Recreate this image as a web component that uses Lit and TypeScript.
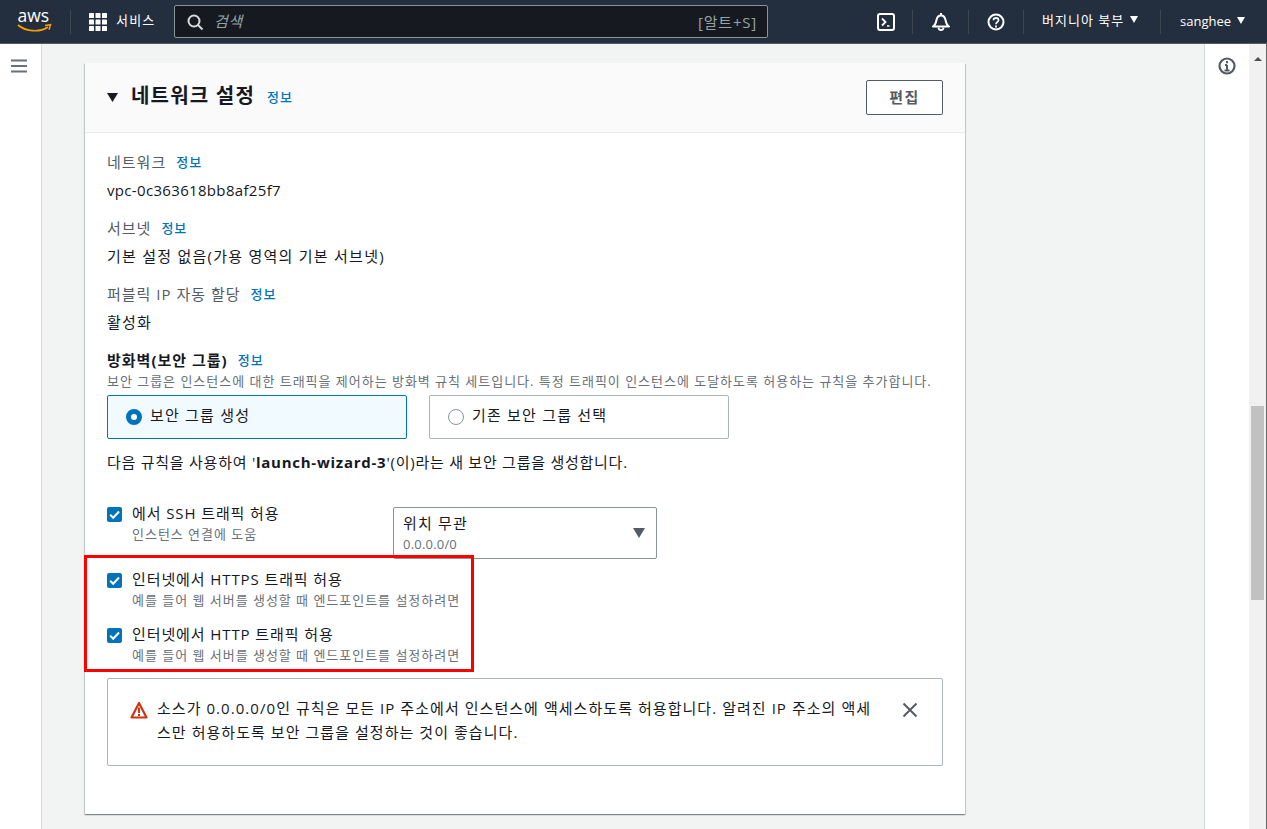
import { LitElement, html, css } from "lit";
import { customElement } from "lit/decorators.js";

const check = html`<svg class="cbx" viewBox="0 0 15 15" width="15" height="15"><rect width="15" height="15" rx="2" fill="#0073bb"/><path d="M3.200 7.700l3 3L12 4.500" fill="none" stroke="#fff" stroke-width="2"/></svg>`;
const caret = html`<svg viewBox="0 0 8 7" width="8" height="7"><path d="M0 0h8L4 7z" fill="currentColor"/></svg>`;

@customElement("app-root")
export class AppRoot extends LitElement {
  static styles = css`
    :host { display: flex; flex-direction: column; width: 1267px; height: 829px; overflow: hidden; font-family: "Open Sans", "Noto Sans CJK KR", sans-serif; font-size: 15px; color: #16191f; background: #f2f3f3; }
    * { box-sizing: border-box; }
    svg { display: block; flex: none; overflow: visible; }
    header { height: 44px; flex: none; background: #232f3e; border-bottom: 1px solid #545b64; display: flex; align-items: center; color: #fff; }
    .logo { margin-left: 17px; }
    .hsep { width: 1px; height: 24px; background: #414750; flex: none; }
    .logo-sep { margin-left: 17px; }
    .apps { margin-left: 18px; }
    .svc { margin-left: 9px; width: 39px; font-size: 13px; letter-spacing: 1.200px; line-height: 16px; margin-bottom: 3px; white-space: nowrap; }
    .search { margin-left: 19px; width: 594px; height: 33px; background: #16191f; border: 1px solid #879596; border-radius: 2px; display: flex; align-items: center; color: #d5dbdb; }
    .search svg { margin-left: 12px; }
    .search .ph { margin-left: 11px; font-style: italic; color: #95a5a6; font-size: 15px; letter-spacing: .8px; margin-bottom: 2px; }
    .search .kbd { margin-left: auto; margin-right: 10px; color: #95a5a6; font-size: 15px; letter-spacing: .8px; }
    .tools { margin-left: auto; display: flex; align-items: center; height: 100%; color: #fff; }
    .ti { display: flex; align-items: center; justify-content: center; height: 24px; }
    .w-term { width: 52px; }
    .w-bell { width: 55px; }
    .w-help { width: 54px; }
    .region { font-size: 13px; display: flex; align-items: center; gap: 6px; line-height: 16px; white-space: nowrap; }
    .w-region { width: 136px; padding-left: 18px; margin-bottom: 4px; letter-spacing: 1px; }
    .w-user { width: 106px; padding-left: 19px; margin-bottom: 2px; }
    .body { flex: 1; display: flex; min-height: 0; }
    .left { width: 42px; flex: none; background: #fff; border-right: 1px solid #d5dbdb; padding: 15px 0 0 11px; }
    .main { flex: 1; min-width: 0; padding: 19px 0 0 43px; }
    .card { width: 880px; height: 751px; background: #fff; box-shadow: 0 1px 1px 0 rgba(0,28,36,.3), 1px 1px 1px 0 rgba(0,28,36,.15), -1px 1px 1px 0 rgba(0,28,36,.15); }
    .chead { height: 70px; background: #fafafa; border-bottom: 1px solid #eaeded; display: flex; align-items: center; padding: 0 22px; }
    .chead .tri { color: #16191f; margin-right: 13px; }
    h2 { margin: 0 0 4px; font-size: 20px; letter-spacing: 1.200px; font-weight: 700; line-height: 24px; white-space: nowrap; }
    .info { color: #0073bb; font-size: 13px; letter-spacing: 1px; font-weight: 500; line-height: 16px; white-space: nowrap; }
    .chead .info { margin-left: 12px; margin-bottom: 1px; }
    .edit { margin-left: auto; width: 77px; height: 35px; background: #fff; border: 1px solid #545b64; border-radius: 2px; display: flex; align-items: center; justify-content: center; color: #545b64; font-weight: 700; font-size: 15px; letter-spacing: 1.500px; padding-bottom: 2px; }
    .cbody { padding: 19px 22px 0; }
    .lbl { display: flex; align-items: center; gap: 10px; color: #545b64; line-height: 20px; letter-spacing: 1px; white-space: nowrap; }
    .val { line-height: 20px; margin-top: 8px; margin-bottom: 18px; letter-spacing: 1.250px; white-space: nowrap; }
    .val.vpc { letter-spacing: .33px; }
    .fw { font-weight: 700; color: #16191f; }
    .desc { font-size: 13px; line-height: 15px; letter-spacing: .98px; color: #687078; white-space: nowrap; }
    .lead { margin-top: 4px; }
    .tiles { display: flex; gap: 22px; margin-top: 6px; }
    .tile { width: 300px; height: 44px; border: 1px solid #aab7b8; border-radius: 2px; display: flex; align-items: center; gap: 8px; padding-left: 18px; letter-spacing: 1.200px; }
    .tile.on { background: #f1faff; border-color: #0073bb; }
    .rd { width: 16px; height: 16px; border-radius: 50%; flex: none; border: 1px solid #879596; background: #fff; }
    .on .rd { border: 5px solid #0073bb; }
    .tile span { position: relative; top: -3px; }
    .note { margin-top: 11px; line-height: 24px; letter-spacing: .75px; white-space: nowrap; }
    .ssh { display: flex; margin-top: 33px; }
    .opt { display: flex; gap: 10px; width: 286px; letter-spacing: .9px; }
    .ssh .opt { margin-top: -4px; }
    .cbx { margin-top: 4px; }
    .opt-t { line-height: 20px; white-space: nowrap; }
    .opt-t .desc { line-height: 18px; margin-top: 2px; }
    .sel { width: 264px; height: 52px; border: 1px solid #879596; border-radius: 2px; display: flex; align-items: center; padding: 0 11px 0 9px; color: #545b64; }
    .sel .t { color: #16191f; line-height: 20px; letter-spacing: 1.200px; margin-top: -1px; }
    .sel .s { font-size: 13px; letter-spacing: .2px; color: #687078; line-height: 18px; margin-top: 2px; }
    .sel svg { margin-left: auto; }
    .hl { width: 390px; margin-top: -4px; margin-left: -23px; height: 117px; border: 3px solid #f00; padding: 11px 0 0 20px; position: relative; display: flex; flex-direction: column; gap: 15px; }
    .hl .opt { width: auto; }
    .alert { width: 836px; height: 88px; margin-top: 6px; border: 1px solid #aab7b8; border-radius: 2px; display: flex; padding: 17px 0 0 22px; }
    .alert .tri { margin-top: 5px; }
    .alert .m { width: 715px; flex: none; margin-left: 9px; line-height: 24px; letter-spacing: 1.050px; }
    .alert .x { margin: 6px 0 0 30px; }
    .right { width: 45px; flex: none; background: #fff; border-left: 1px solid #d5dbdb; padding: 13px 0 0 13px; }
    .sb { width: 18px; flex: none; background: #f1f1f1; border-right: 1px solid #666; display: flex; flex-direction: column; align-items: center; }
    .sb .up { margin-top: 13px; width: 0; height: 0; border: 4px solid transparent; border-top: 0; border-bottom: 4px solid #505050; }
    .sb .th { width: 13px; height: 194px; background: #c1c1c1; margin-top: 345px; }
  `;

  render() {
    return html`
      <header>
        <svg class="logo" viewBox="0 0 36 26" width="36" height="26"><text x="0.500" y="12.500" font-family="Open Sans" font-size="17.500" fill="#fff">aws</text><path d="M1 16c8 7 22 7.500 30 2" fill="none" stroke="#f90" stroke-width="1.700"/><path d="M28 16.500l5.500-.8-1.500 5" fill="none" stroke="#f90" stroke-width="1.500"/></svg>
        <div class="hsep logo-sep"></div>
        <svg class="apps" viewBox="0 0 18 18" width="18" height="18" fill="#fff"><rect width="5" height="5" rx=".6"/><rect x="6.500" width="5" height="5" rx=".6"/><rect x="13" width="5" height="5" rx=".6"/><rect y="6.500" width="5" height="5" rx=".6"/><rect x="6.500" y="6.500" width="5" height="5" rx=".6"/><rect x="13" y="6.500" width="5" height="5" rx=".6"/><rect y="13" width="5" height="5" rx=".6"/><rect x="6.500" y="13" width="5" height="5" rx=".6"/><rect x="13" y="13" width="5" height="5" rx=".6"/></svg>
        <span class="svc">서비스</span>
        <div class="search">
          <svg viewBox="0 0 16 16" width="16" height="16" fill="none" stroke="#d5dbdb" stroke-width="2"><circle cx="7" cy="7" r="5.500"/><path d="M11 11l4.500 4.500"/></svg>
          <span class="ph">검색</span>
          <span class="kbd">[알트+S]</span>
        </div>
        <div class="tools">
          <div class="ti w-term"><svg viewBox="0 0 18 18" width="18" height="18" fill="none" stroke="#fff" stroke-width="2"><rect x="1" y="1" width="16" height="16" rx="2"/><path d="M5 5.500l3.500 3.500L5 12.500" stroke-width="1.800"/><path d="M10 13h2.500" stroke-width="1.500"/></svg></div>
          <div class="hsep"></div>
          <div class="ti w-bell"><svg viewBox="0 0 18 18" width="18" height="18" fill="none" stroke="#fff" stroke-width="2"><path d="M1 13.500c2.500-1.500 3-4 3.500-6.500S6.500 2.500 9 2.500 13 4.500 13.500 7 14.500 12 17 13.500z" stroke-linejoin="round"/><path d="M9 0v2.500"/><path d="M6.500 14.500a2.500 2.500 0 0 0 5 0" stroke-width="1.800"/></svg></div>
          <div class="hsep"></div>
          <div class="ti w-help"><svg viewBox="0 0 18 18" width="18" height="18" fill="none" stroke="#fff" stroke-width="2"><circle cx="9" cy="9" r="7.500"/><path d="M6.500 7.200c0-3.200 5-3.200 5 0 0 2-2.500 2-2.500 4" stroke-width="1.700"/><path d="M9 12.500v2" stroke-width="1.800"/></svg></div>
          <div class="hsep"></div>
          <div class="region w-region"><span>버지니아 북부</span>${caret}</div>
          <div class="hsep"></div>
          <div class="region w-user"><span>sanghee</span>${caret}</div>
        </div>
      </header>
      <div class="body">
        <div class="left">
          <svg viewBox="0 0 16 14" width="16" height="14"><path d="M0 1.500h16M0 7h16M0 12.500h16" stroke="#687078" stroke-width="2.200"/></svg>
        </div>
        <div class="main">
          <section class="card">
            <div class="chead">
              <svg class="tri" viewBox="0 0 11 9" width="11" height="9"><path d="M0 0h11L5.500 9z" fill="currentColor"/></svg>
              <h2>네트워크 설정</h2><span class="info">정보</span>
              <div class="edit">편집</div>
            </div>
            <div class="cbody">
              <div class="lbl">네트워크 <span class="info">정보</span></div>
              <div class="val vpc">vpc-0c363618bb8af25f7</div>
              <div class="lbl">서브넷 <span class="info">정보</span></div>
              <div class="val">기본 설정 없음(가용 영역의 기본 서브넷)</div>
              <div class="lbl">퍼블릭 IP 자동 할당 <span class="info">정보</span></div>
              <div class="val">활성화</div>
              <div class="lbl fw">방화벽(보안 그룹) <span class="info">정보</span></div>
              <div class="desc lead">보안 그룹은 인스턴스에 대한 트래픽을 제어하는 방화벽 규칙 세트입니다. 특정 트래픽이 인스턴스에 도달하도록 허용하는 규칙을 추가합니다.</div>
              <div class="tiles">
                <div class="tile on"><div class="rd"></div><span>보안 그룹 생성</span></div>
                <div class="tile"><div class="rd"></div><span>기존 보안 그룹 선택</span></div>
              </div>
              <div class="note">다음 규칙을 사용하여 '<b>launch-wizard-3</b>'(이)라는 새 보안 그룹을 생성합니다.</div>
              <div class="ssh">
                <div class="opt">${check}<div class="opt-t">에서 SSH 트래픽 허용<div class="desc">인스턴스 연결에 도움</div></div></div>
                <div class="sel"><div><div class="t">위치 무관</div><div class="s">0.0.0.0/0</div></div><svg viewBox="0 0 12 10" width="12" height="10"><path d="M0 0h12L6 10z" fill="#545b64"/></svg></div>
              </div>
              <div class="hl">
                <div class="opt">${check}<div class="opt-t">인터넷에서 HTTPS 트래픽 허용<div class="desc">예를 들어 웹 서버를 생성할 때 엔드포인트를 설정하려면</div></div></div>
                <div class="opt">${check}<div class="opt-t">인터넷에서 HTTP 트래픽 허용<div class="desc">예를 들어 웹 서버를 생성할 때 엔드포인트를 설정하려면</div></div></div>
              </div>
              <div class="alert">
                <svg class="tri" viewBox="0 0 18 18" width="18" height="18"><path d="M9 2L1.500 16.500h15z" fill="none" stroke="#d13212" stroke-width="2.200" stroke-linejoin="round"/><path d="M9 6.500v5.500M9 13v2" stroke="#d13212" stroke-width="2"/></svg>
                <div class="m">소스가 0.0.0.0/0인 규칙은 모든 IP 주소에서 인스턴스에 액세스하도록 허용합니다. 알려진 IP 주소의 액세스만 허용하도록 보안 그룹을 설정하는 것이 좋습니다.</div>
                <svg class="x" viewBox="0 0 16 16" width="16" height="16"><path d="M1.500 1.500l13 13M14.500 1.500l-13 13" stroke="#545b64" stroke-width="2"/></svg>
              </div>
            </div>
          </section>
        </div>
        <div class="right">
          <svg viewBox="0 0 18 18" width="18" height="18" fill="none"><circle cx="9" cy="9" r="7.500" stroke="#545b64" stroke-width="2.200"/><path d="M9 4v2.200M9 8v5M6.500 13.500h5M7 8h2" stroke="#545b64" stroke-width="2"/></svg>
        </div>
        <div class="sb"><div class="up"></div><div class="th"></div></div>
      </div>
    `;
  }
}
